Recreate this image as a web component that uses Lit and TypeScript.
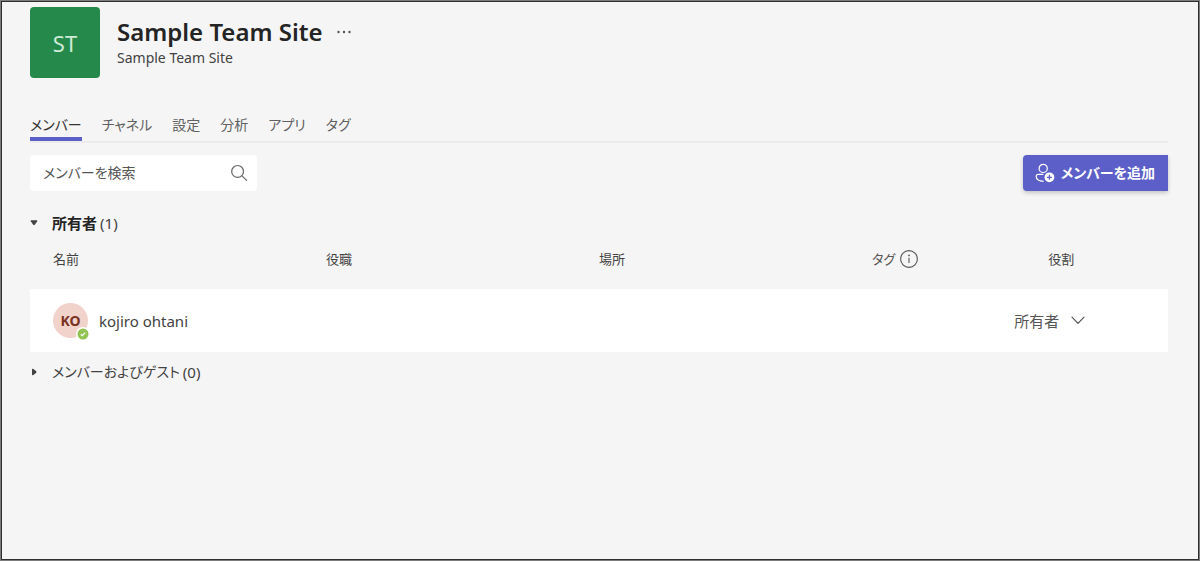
import { LitElement, html, css, svg } from "lit";
import { customElement, state } from "lit/decorators.js";

interface Member {
  name: string;
  initials: string;
  title: string;
  location: string;
  tags: string;
  role: string;
}

const searchIcon = svg`<svg class="icon" width="18" height="18" viewBox="0 0 18 18" fill="none" stroke="currentColor" stroke-width="1.2" stroke-linecap="round" aria-hidden="true"><circle cx="7.6" cy="7.4" r="5.9"/><path d="M12 11.8 16.6 16.4"/></svg>`;

const personAddIcon = svg`<svg class="icon" width="20" height="20" viewBox="0 0 20 20" fill="none" stroke="currentColor" stroke-width="1.2" aria-hidden="true"><circle cx="8.2" cy="5.4" r="4.1"/><path d="M8.4 11.4H3.2c-1.2 0-2 .8-2 1.9 0 3 2.9 4.9 7.4 5"/><circle cx="14.4" cy="14.3" r="4.9" fill="currentColor" stroke="none"/><path d="M14.4 11.8v5M11.9 14.3h5" stroke="#5b5fc7" stroke-width="1.3"/></svg>`;

const infoIcon = svg`<svg class="icon" width="20" height="20" viewBox="0 0 20 20" fill="none" stroke="currentColor" stroke-width="1.1" aria-hidden="true"><circle cx="10" cy="10" r="8.4"/><path d="M10 8.7v5.3"/><circle cx="10" cy="6.4" r="0.85" fill="currentColor" stroke="none"/></svg>`;

const chevronIcon = svg`<svg class="chevron" width="14" height="9" viewBox="0 0 14 9" fill="none" stroke="currentColor" stroke-width="1.2" stroke-linecap="round" stroke-linejoin="round" aria-hidden="true"><path d="M1 1.2 7 7.4 13 1.2"/></svg>`;

const checkIcon = svg`<svg width="12" height="12" viewBox="0 0 12 12" aria-hidden="true"><circle cx="6" cy="6" r="5.5" fill="#92c353"/><path d="M3.8 6.2 5.3 7.6 8.2 4.7" fill="none" stroke="#fff" stroke-width="1.2"/></svg>`;

const moreIcon = svg`<svg width="16" height="4" viewBox="0 0 16 4" fill="currentColor" aria-hidden="true"><circle cx="2.5" cy="2" r="1.2"/><circle cx="8" cy="2" r="1.2"/><circle cx="13.5" cy="2" r="1.2"/></svg>`;

const caretDown = svg`<svg width="8" height="8" viewBox="0 0 8 8" fill="currentColor" aria-hidden="true"><path d="M1.4 1.2h5.2q1 0 .6 1L5 5.400q-1 1-2 0L.8 2.200Q.4 1.200 1.400 1.200Z"/></svg>`;

const caretRight = svg`<svg width="8" height="8" viewBox="0 0 8 8" fill="currentColor" aria-hidden="true"><path d="M2 1.400q0-1 1-.6L6 3q1 1 0 2L3 7.200Q2 7.600 2 6.600Z"/></svg>`;

@customElement("app-root")
export class AppRoot extends LitElement {
  @state() private activeTab = "メンバー";
  @state() private ownersOpen = true;
  @state() private guestsOpen = false;

  private tabs = ["メンバー", "チャネル", "設定", "分析", "アプリ", "タグ"];
  private owners: Member[] = [
    { name: "kojiro ohtani", initials: "KO", title: "", location: "", tags: "", role: "所有者" },
  ];

  static styles = css`
    :host {
      display: block;
      font-family: "Noto Sans", "Noto Sans CJK JP", sans-serif;
      font-feature-settings: "palt";
      font-size: 15px;
      line-height: 20px;
      color: #424242;
    }
    * {
      box-sizing: border-box;
    }
    button,
    input,
    select {
      font: inherit;
      font-feature-settings: inherit;
      color: inherit;
      border: 0;
      background: none;
      margin: 0;
      padding: 0;
    }
    .icon {
      flex: none;
      display: block;
    }
    .page {
      min-height: 100vh;
      padding: 6px 31px 24px 29px;
      border: 1px solid #7c7c7c;
      box-shadow: inset 0 0 0 1px #2f2f2f;
      background: #f5f5f5;
    }
    .team {
      display: flex;
      gap: 17px;
    }
    .logo {
      display: flex;
      align-items: center;
      justify-content: center;
      width: 70px;
      height: 71px;
      border-radius: 4px;
      background: #25894b;
      color: #cdebd6;
      font-size: 22px;
    }
    .titles {
      padding-top: 9px;
    }
    .title-line {
      display: flex;
      align-items: center;
      gap: 13px;
    }
    h1 {
      margin: 0;
      font-size: 24px;
      line-height: 32px;
      font-weight: 600;
      color: #242424;
    }
    .more {
      display: flex;
      color: #555;
    }
    .subtitle {
      margin: 0;
      font-size: 14px;
    }
    .tabs {
      display: flex;
      gap: 20px;
      margin-top: 37px;
      border-bottom: 2px solid #ebebeb;
      font-size: 14px;
    }
    .tab {
      padding-bottom: 2px;
      border-bottom: 4px solid transparent;
      color: #616161;
    }
    .tab.active {
      border-color: #5b5fc7;
      color: #333;
    }
    .toolbar {
      display: flex;
      justify-content: space-between;
      margin-top: 12px;
      font-size: 14px;
    }
    .search {
      display: flex;
      align-items: center;
      width: 227px;
      height: 36px;
      padding: 0 9px 0 13px;
      border-radius: 4px;
      background: #fff;
      color: #666;
    }
    .search input {
      flex: 1;
      min-width: 0;
      outline: none;
    }
    .search input::placeholder {
      color: #555;
      opacity: 1;
    }
    .add {
      display: flex;
      align-items: center;
      gap: 6px;
      height: 36px;
      padding: 0 13px 0 12px;
      border-radius: 4px 0 0 4px;
      background: #5b5fc7;
      box-shadow: 0 2px 4px rgba(0, 0, 0, 0.2);
      color: #fff;
      font-weight: 600;
    }
    .section {
      margin: 0;
      font: inherit;
    }
    .toggle {
      display: flex;
      align-items: center;
      height: 40px;
      gap: 14px;
      color: #424242;
    }
    .label {
      font-size: 14px;
    }
    .label.strong {
      font-size: 15px;
      font-weight: 600;
      color: #242424;
    }
    .caption {
      display: flex;
      gap: 3px;
    }
    .owners {
      margin-top: 12px;
    }
    table {
      width: 100%;
      border-collapse: collapse;
      table-layout: fixed;
    }
    th {
      height: 46px;
      padding: 0 0 14px;
      text-align: left;
      font-size: 13px;
      font-weight: 400;
    }
    th:first-child,
    td:first-child {
      padding-left: 23px;
    }
    .w-name {
      width: 26%;
    }
    .w-wide {
      width: 24%;
    }
    .w-tag {
      width: 12.5%;
    }
    th.role {
      padding-left: 34px;
    }
    .tag-head {
      display: flex;
      align-items: center;
      gap: 4px;
      color: #555;
    }
    td {
      height: 63px;
      padding: 0;
      background: #fff;
    }
    .person {
      display: flex;
      align-items: center;
      gap: 11px;
    }
    .avatar {
      position: relative;
      display: flex;
      align-items: center;
      justify-content: center;
      width: 35px;
      height: 35px;
      border-radius: 50%;
      background: #f1d3cc;
      color: #7a3222;
      font-size: 14px;
      font-weight: 700;
    }
    .presence {
      position: absolute;
      right: -2px;
      bottom: -3px;
      display: flex;
      padding: 1px;
      border-radius: 50%;
      background: #fff;
    }
    .role-pick {
      display: inline-grid;
      align-items: center;
      color: #555;
    }
    .role-pick select {
      grid-area: 1 / 1;
      appearance: none;
      padding-right: 25px;
    }
    .role-pick .chevron {
      grid-area: 1 / 1;
      justify-self: end;
      pointer-events: none;
    }
  `;

  private renderSection(label: string, count: number, open: boolean, flip: () => void) {
    return html`<h2 class="section">
      <button class="toggle" aria-expanded=${open} @click=${flip}>
        ${open ? caretDown : caretRight}
        <span class="caption"><span class="label ${open ? "strong" : ""}">${label}</span><span>(${count})</span></span>
      </button>
    </h2>`;
  }

  private renderRow(m: Member) {
    return html`<tr>
      <td>
        <div class="person">
          <span class="avatar">${m.initials}<span class="presence">${checkIcon}</span></span>
          <span>${m.name}</span>
        </div>
      </td>
      <td>${m.title}</td>
      <td>${m.location}</td>
      <td>${m.tags}</td>
      <td>
        <span class="role-pick">
          <select aria-label="役割"><option>${m.role}</option></select>
          ${chevronIcon}
        </span>
      </td>
    </tr>`;
  }

  render() {
    return html`<main class="page">
      <header class="team">
        <div class="logo">ST</div>
        <div class="titles">
          <div class="title-line">
            <h1>Sample Team Site</h1>
            <button class="more" aria-label="その他">${moreIcon}</button>
          </div>
          <p class="subtitle">Sample Team Site</p>
        </div>
      </header>
      <nav class="tabs" role="tablist">
        ${this.tabs.map(
          (t) => html`<button
            class="tab ${t === this.activeTab ? "active" : ""}"
            role="tab"
            aria-selected=${t === this.activeTab}
            @click=${() => (this.activeTab = t)}
          >${t}</button>`
        )}
      </nav>
      <div class="toolbar">
        <label class="search">
          <input type="text" placeholder="メンバーを検索" aria-label="メンバーを検索" />
          ${searchIcon}
        </label>
        <button class="add">${personAddIcon}<span>メンバーを追加</span></button>
      </div>
      <section class="owners">
        ${this.renderSection("所有者", 1, this.ownersOpen, () => (this.ownersOpen = !this.ownersOpen))}
        ${this.ownersOpen
          ? html`<table>
              <colgroup>
                <col class="w-name" /><col class="w-wide" /><col class="w-wide" /><col class="w-tag" /><col />
              </colgroup>
              <thead>
                <tr>
                  <th scope="col">名前</th>
                  <th scope="col">役職</th>
                  <th scope="col">場所</th>
                  <th scope="col"><span class="tag-head">タグ ${infoIcon}</span></th>
                  <th scope="col" class="role">役割</th>
                </tr>
              </thead>
              <tbody>
                ${this.owners.map((m) => this.renderRow(m))}
              </tbody>
            </table>`
          : ""}
      </section>
      <section>
        ${this.renderSection("メンバーおよびゲスト", 0, this.guestsOpen, () => (this.guestsOpen = !this.guestsOpen))}
      </section>
    </main>`;
  }
}
